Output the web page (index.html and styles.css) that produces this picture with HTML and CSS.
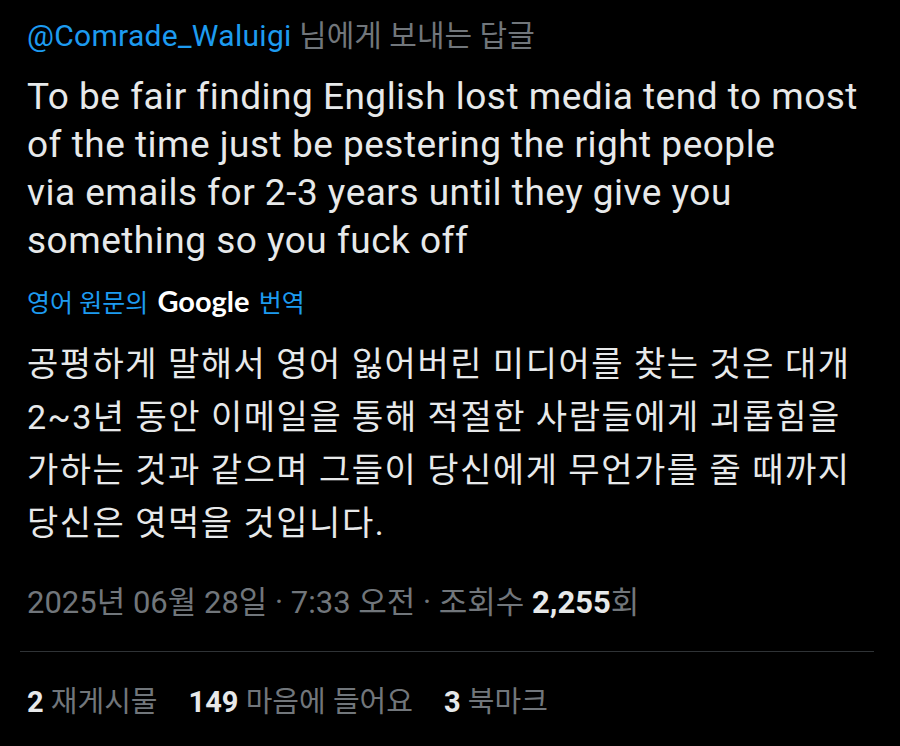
FILE: index.html
```html
<!DOCTYPE html>
<html lang="ko">
<head>
  <meta charset="UTF-8">
  <meta name="viewport" content="width=device-width, initial-scale=1.0">
  <title>답글</title>
  <link rel="stylesheet" href="styles.css">
</head>
<body>
  <div class="tweet">
    <div class="reply-to"><span class="handle">@Comrade_Waluigi</span> 님에게 보내는 답글</div>

    <p class="tweet-text">To be fair finding English lost media tend to most<br>
      of the time just be pestering the right people<br>
      via emails for 2-3 years until they give you<br>
      something so you fuck off</p>

    <div class="translated-by">영어 원문의 <span class="google">Google</span> 번역</div>

    <p class="translation">공평하게 말해서 영어 잃어버린 미디어를 찾는 것은 대개<br>
      2~3년 동안 이메일을 통해 적절한 사람들에게 괴롭힘을<br>
      가하는 것과 같으며 그들이 당신에게 무언가를 줄 때까지<br>
      당신은 엿먹을 것입니다.</p>

    <div class="meta">2025년 06월 28일 · 7:33 오전 · 조회수 <b>2,255</b>회</div>
  </div>

  <div class="divider"></div>

  <div class="stats">
    <span><b>2</b> 재게시물</span>
    <span><b>149</b> 마음에 들어요</span>
    <span><b>3</b> 북마크</span>
  </div>
</body>
</html>
```

FILE: styles.css
```css
body {
  margin: 0;
  background: #000;
  color: #e7e9ea;
  font-family: Roboto, "Noto Sans CJK KR", sans-serif;
}
.tweet {
  padding: 16px 20px 0 27px;
}
.reply-to {
  font-size: 30px;
  line-height: 40px;
  color: #71767b;
}
.handle {
  color: #1d9bf0;
  letter-spacing: 0.3px;
}
.tweet-text {
  margin: 17px 0 0;
  font-size: 37px;
  line-height: 48px;
  letter-spacing: 0.5px;
  white-space: nowrap;
}
.translated-by {
  margin-top: 19px;
  font-size: 25px;
  line-height: 34px;
  color: #1d9bf0;
}
.google {
  color: #fff;
  font-family: Lato, sans-serif;
  font-weight: 700;
  font-size: 29px;
  margin: 0 3px;
}
.translation {
  margin: 17px 0 0;
  font-size: 34px;
  line-height: 53px;
  letter-spacing: 1.5px;
  white-space: nowrap;
}
.meta {
  margin-top: 33px;
  font-size: 31px;
  line-height: 40px;
  color: #71767b;
}
.meta b {
  color: #e7e9ea;
}
.divider {
  height: 1px;
  background: #2f3336;
  margin: 28px 26px 0 20px;
}
.stats {
  display: flex;
  gap: 31px;
  padding: 30px 27px;
  font-size: 29px;
  line-height: 40px;
  color: #71767b;
}
.stats b {
  color: #e7e9ea;
}
```
